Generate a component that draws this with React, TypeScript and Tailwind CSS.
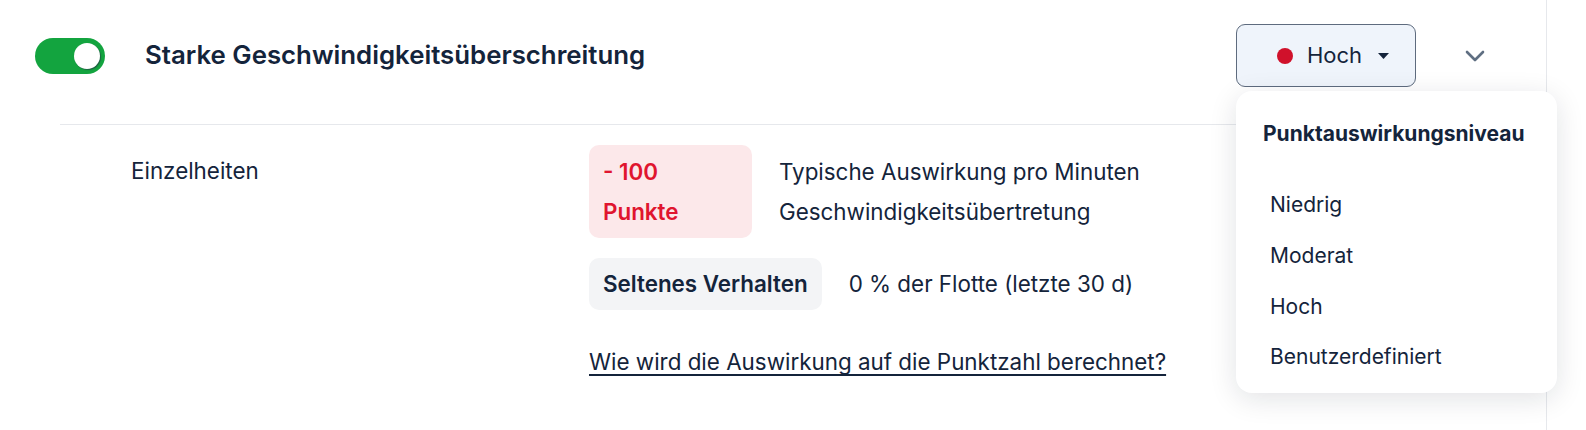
import { useState } from 'react';

const levels = ['Niedrig', 'Moderat', 'Hoch', 'Benutzerdefiniert'];

function Toggle({ on }: { on: boolean }) {
  return (
    <div
      className={`flex h-[36px] w-[70px] shrink-0 items-center rounded-full px-[5px] ${
        on ? 'justify-end bg-[#13a43f]' : 'justify-start bg-gray-300'
      }`}
    >
      <span className="h-[26px] w-[26px] rounded-full bg-white shadow-[1px_1px_1px_rgba(40,50,70,0.6)]" />
    </div>
  );
}

function LevelMenu() {
  return (
    <div className="absolute left-0 top-[67px] z-10 h-[302px] w-[321px] rounded-[16px] bg-white pt-[29px] shadow-[0_6px_28px_rgba(15,23,42,0.12)]">
      <div className="pl-[27px] text-[21px] font-bold leading-[28px]">Punktauswirkungsniveau</div>
      <ul className="mt-[32px]">
        {levels.map((l) => (
          <li key={l} className="flex h-[50.7px] items-center pl-[34px] text-[21px] leading-[28px]">
            {l}
          </li>
        ))}
      </ul>
    </div>
  );
}

export default function App() {
  const [enabled] = useState(true);

  return (
    <div className="relative h-[430px] w-[1586px] overflow-hidden bg-white font-['Inter',sans-serif] text-[#14243b]">
      <div className="h-full w-[1547px] border-r border-[#e6e8ec]">
        {/* header */}
        <div className="flex items-center pb-[37px] pl-[35px] pr-[59px] pt-[24px]">
          <Toggle on={enabled} />
          <h2 className="ml-[40px] flex-1 text-[25.8px] font-semibold">Starke Geschwindigkeitsüberschreitung</h2>
          <div className="relative">
            <button className="flex h-[63px] w-[180px] items-center rounded-[9px] border border-[#5e6b7e] bg-[#eff4fb] pl-[40px] text-[22px]">
              <span className="h-[16px] w-[16px] rounded-full bg-[#d0112b]" />
              <span className="ml-[14px]">Hoch</span>
              <svg className="ml-[16px]" width="11" height="6" viewBox="0 0 11 6">
                <path d="M0 0h11L5.5 6z" fill="#14243b" />
              </svg>
            </button>
            <LevelMenu />
          </div>
          <svg className="ml-[47px]" width="24" height="14" viewBox="0 0 24 14">
            <path d="M4 3l8 8 8-8" fill="none" stroke="#5f6f82" strokeWidth="2.6" strokeLinecap="round" strokeLinejoin="round" />
          </svg>
        </div>
        <div className="ml-[60px] border-t border-[#e6e8ec]" />

        {/* details */}
        <div className="flex pt-[20px] text-[22.4px]">
          <div className="w-[589px] pl-[131px] pt-[6px] leading-[40px]">Einzelheiten</div>
          <div className="flex flex-col">
            <div className="flex items-center gap-[27px]">
              <div className="flex h-[93px] w-[163px] flex-col justify-center rounded-[10px] bg-[#fce8ea] px-[14px] font-semibold leading-[40px] text-[#e0152f]">
                <span>- 100</span>
                <span>Punkte</span>
              </div>
              <p className="leading-[40px]">
                Typische Auswirkung pro Minuten
                <br />
                Geschwindigkeitsübertretung
              </p>
            </div>
            <div className="mt-[20px] flex items-center gap-[27px]">
              <div className="flex h-[52px] items-center rounded-[10px] bg-[#f3f4f6] px-[14px] font-semibold">
                Seltenes Verhalten
              </div>
              <span>0 % der Flotte (letzte 30 d)</span>
            </div>
            <a
              href="#"
              className="mt-[38px] self-start leading-[28px] underline underline-offset-[4px] [text-decoration-skip-ink:none]"
            >
              Wie wird die Auswirkung auf die Punktzahl berechnet?
            </a>
          </div>
        </div>
      </div>
    </div>
  );
}
